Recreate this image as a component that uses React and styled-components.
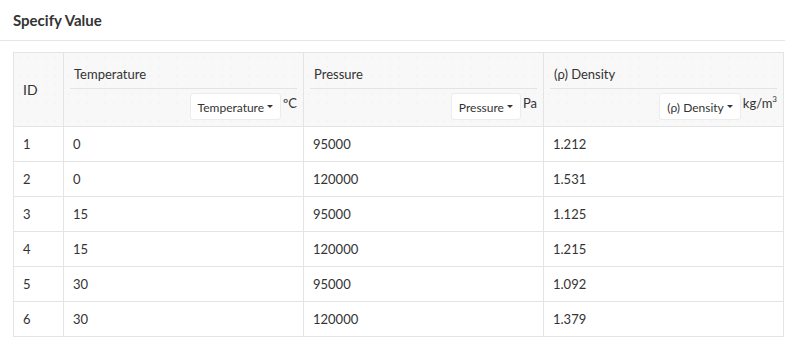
import React from 'react'
import styled, { createGlobalStyle } from 'styled-components'

const GlobalStyle = createGlobalStyle`
  body {
    margin: 0;
    background: #fff;
    font-family: Lato, "Open Sans", sans-serif;
    color: #333;
  }
`

const columns = [
  { key: 'temperature', title: 'Temperature', unit: 'ºC' },
  { key: 'pressure', title: 'Pressure', unit: 'Pa' },
  { key: 'density', title: '(ρ) Density', unit: <>kg/m<sup>3</sup></> },
]

const rows = [
  [1, '0', '95000', '1.212'],
  [2, '0', '120000', '1.531'],
  [3, '15', '95000', '1.125'],
  [4, '15', '120000', '1.215'],
  [5, '30', '95000', '1.092'],
  [6, '30', '120000', '1.379'],
]

export default function App() {
  return (
    <Page>
      <GlobalStyle />
      <Header>
        <Title>Specify Value</Title>
      </Header>
      <Table>
        <colgroup>
          <col style={{ width: 50 }} />
          <col style={{ width: 240 }} />
          <col style={{ width: 240 }} />
          <col style={{ width: 240 }} />
        </colgroup>
        <thead>
          <tr>
            <IdHead>ID</IdHead>
            {columns.map(c => (
              <Th key={c.key}>
                <HeadTitle>{c.title}</HeadTitle>
                <HeadControls>
                  <Select>
                    {c.title}
                    <Caret />
                  </Select>
                  <Unit>{c.unit}</Unit>
                </HeadControls>
              </Th>
            ))}
          </tr>
        </thead>
        <tbody>
          {rows.map(r => (
            <tr key={r[0]}>
              {r.map((v, i) => (
                <Td key={i}>{v}</Td>
              ))}
            </tr>
          ))}
        </tbody>
      </Table>
    </Page>
  )
}

const Page = styled.div`
  width: 785px;
`
const Header = styled.div`
  height: 41px;
  border-bottom: 1px solid #e6e6e6;
  display: flex;
  align-items: center;
  padding-left: 13px;
  box-sizing: border-box;
`
const Title = styled.h3`
  margin: 0;
  font-size: 15px;
  font-weight: 700;
  color: #333;
`
const Table = styled.table`
  margin: 11px 0 0 13px;
  width: 771px;
  table-layout: fixed;
  border-collapse: collapse;
  font-size: 13px;
  color: #333;
`
const Th = styled.th`
  border: 1px solid #e4e4e4;
  background-color: #f7f8f7;
  background-image: radial-gradient(#e7e9e7 0.7px, transparent 0.8px);
  background-size: 9px 9px;
  padding: 0 6px;
  font-weight: 400;
  text-align: left;
  vertical-align: top;
`
const IdHead = styled(Th)`
  vertical-align: middle;
  padding: 0 9px;
  font-size: 14px;
  height: 73px;
`
const HeadTitle = styled.div`
  height: 36px;
  box-sizing: border-box;
  padding: 12px 0 0 4px;
  line-height: 18px;
  border-bottom: 1px solid #e2e3e2;
`
const HeadControls = styled.div`
  height: 37px;
  display: flex;
  justify-content: flex-end;
  align-items: flex-start;
  padding-top: 4px;
  box-sizing: border-box;
`
const Select = styled.div`
  height: 27px;
  box-sizing: border-box;
  background: #fff;
  border: 1px solid #ececec;
  border-radius: 3px;
  padding: 1px 7px 0 7px;
  display: flex;
  align-items: center;
  gap: 3px;
  font-size: 12px;
  color: #333;
`
const Caret = styled.span`
  width: 0;
  height: 0;
  border-left: 3px solid transparent;
  border-right: 3px solid transparent;
  border-top: 3px solid #333;
  margin-bottom: 2px;
`
const Unit = styled.span`
  margin-left: 2px;
  padding-top: 2px;
  font-size: 13px;
  line-height: 16px;
  sup {
    font-size: 8px;
    vertical-align: top;
    line-height: 8px;
  }
`
const Td = styled.td`
  border: 1px solid #e4e4e4;
  height: 34px;
  padding: 0 9px;
  vertical-align: middle;
`
